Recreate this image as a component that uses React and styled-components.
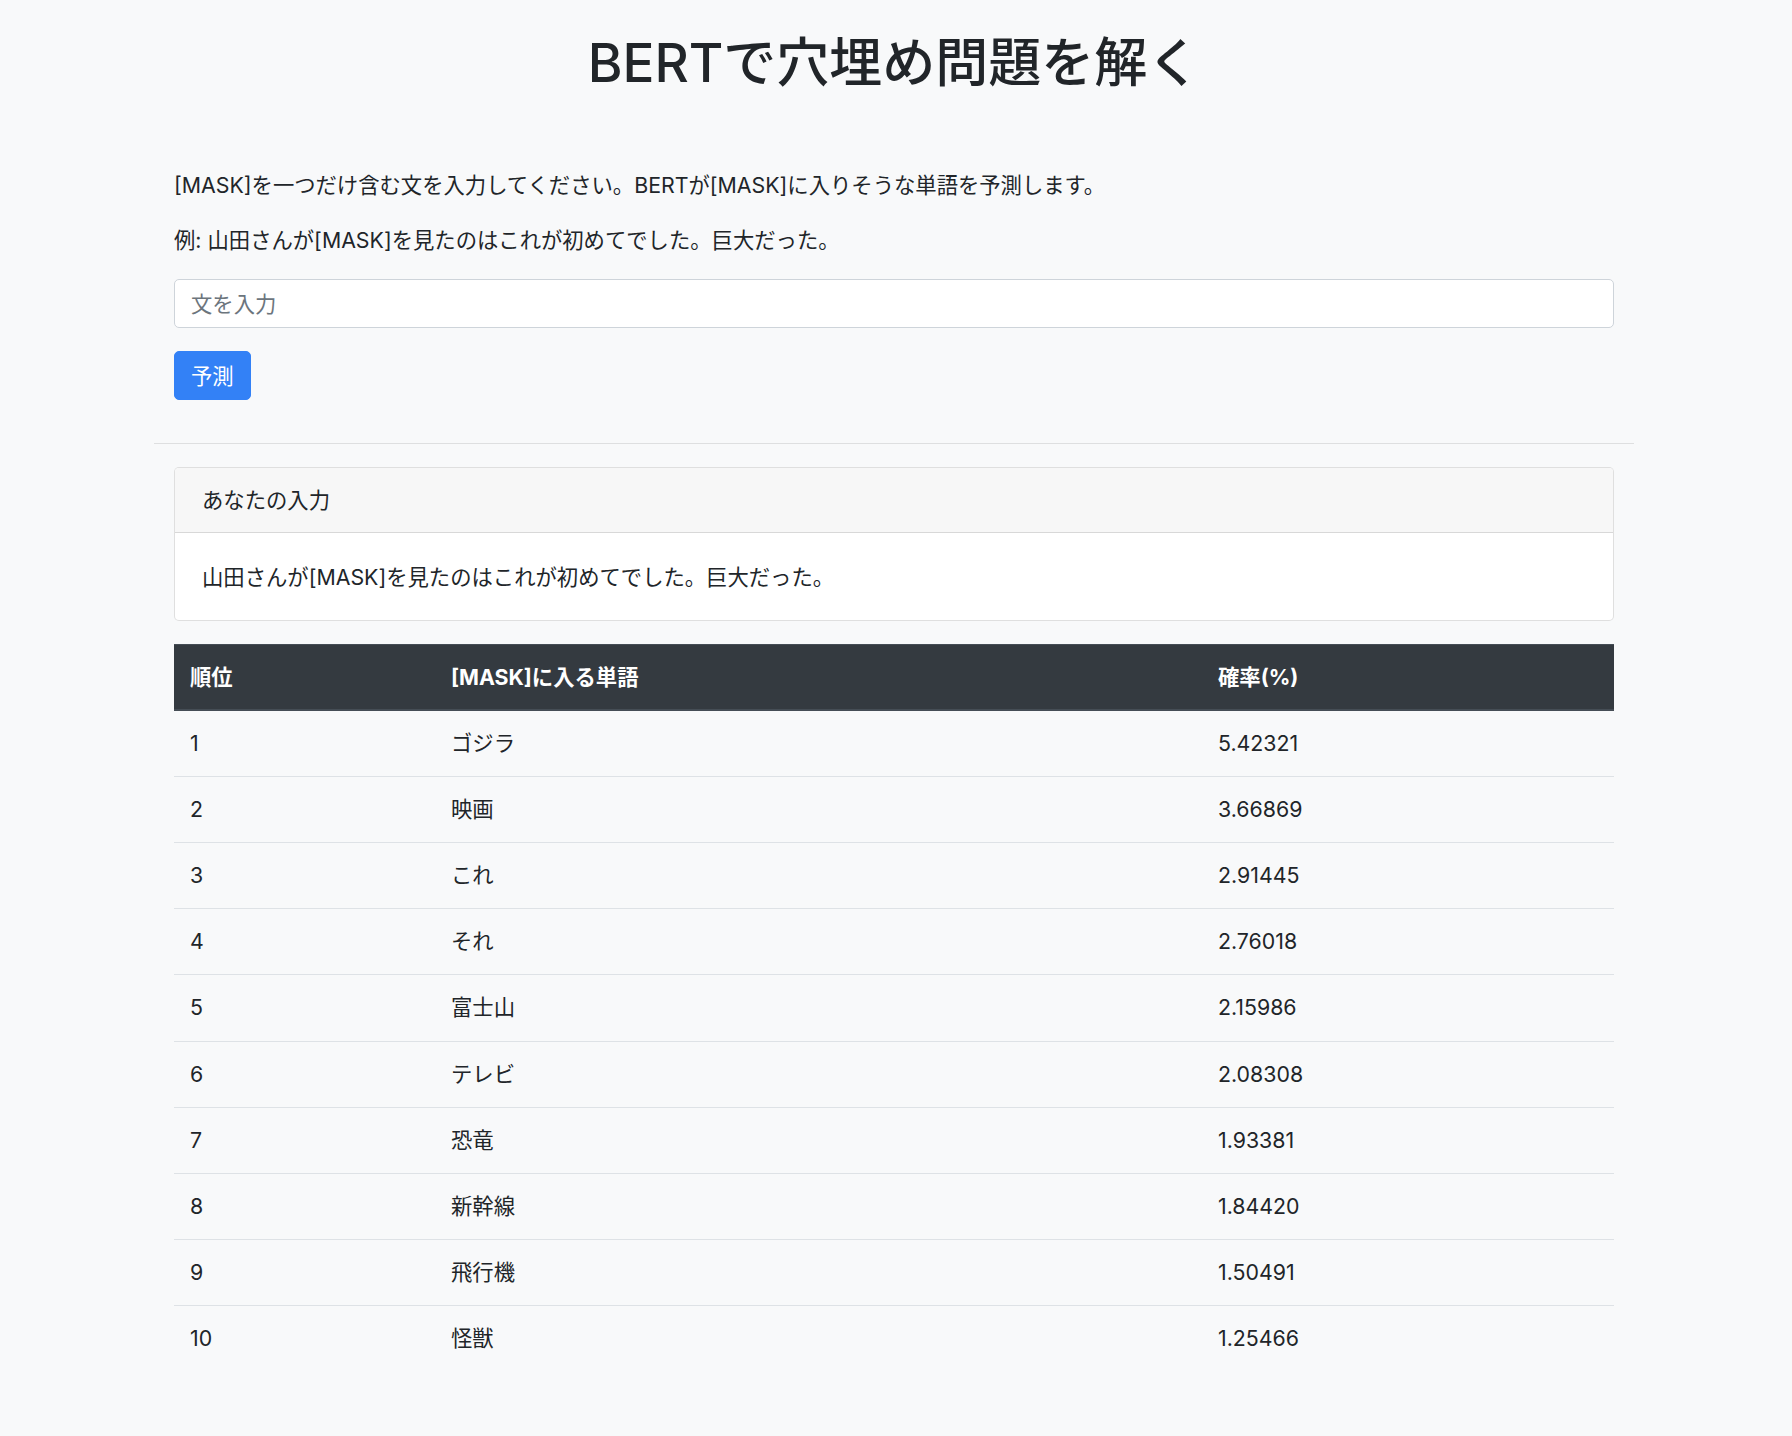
import React from 'react';
import styled, { createGlobalStyle } from 'styled-components';

const GlobalStyle = createGlobalStyle`
  html, body {
    margin: 0;
    padding: 0;
    background-color: #f8f9fa;
  }
  body {
    color: #212529;
    font-family: Inter, "Noto Sans CJK JP", sans-serif;
    font-size: 21.33px;
    line-height: 32px;
  }
  * {
    box-sizing: border-box;
  }
`;

const Page = styled.div`
  width: 1480px;
  margin: 0 calc(50% - 738px) 0 calc(50% - 742px);
  min-height: 100vh;
  padding-bottom: 40px;
`;

const Title = styled.h1`
  margin: 0;
  padding-top: 33px;
  font-size: 53px;
  font-weight: 500;
  line-height: 60px;
  text-align: center;
`;

const Section = styled.div`
  padding: 0 20px;
  margin-top: ${(p) => p.top || 0}px;
`;

const Text = styled.p`
  margin: 0 0 23px;
`;

const Input = styled.input`
  display: block;
  width: 100%;
  height: 49px;
  padding: 0 16px;
  font-family: inherit;
  font-size: 21.33px;
  color: #495057;
  background-color: #fff;
  border: 1px solid #ced4da;
  border-radius: 5px;
  margin-bottom: 23px;

  &::placeholder {
    color: #6c757d;
  }
`;

const Button = styled.button`
  display: inline-block;
  height: 49px;
  padding: 7px 16px;
  font-family: inherit;
  font-size: 21.33px;
  line-height: 32px;
  color: #fff;
  background-color: #3381f6;
  border: 1px solid #3381f6;
  border-radius: 5px;
  cursor: pointer;
  vertical-align: top;
`;

const Divider = styled.hr`
  margin: 43px 0 23px;
  border: 0;
  border-top: 1px solid rgba(0, 0, 0, 0.1);
`;

const Card = styled.div`
  background-color: #fff;
  border: 1px solid rgba(0, 0, 0, 0.125);
  border-radius: 5px;
  margin-bottom: 23px;
  overflow: hidden;
`;

const CardHeader = styled.div`
  padding: 16px 27px;
  background-color: #f7f7f7;
  border-bottom: 1px solid rgba(0, 0, 0, 0.125);
`;

const CardBody = styled.div`
  padding: 27.5px 27px 27px;
`;

const Table = styled.table`
  width: 100%;
  border-collapse: collapse;
  table-layout: fixed;
`;

const Th = styled.th`
  width: ${(p) => p.w || 'auto'};
  padding: 16px 16px;
  line-height: 32px;
  text-align: left;
  font-weight: 700;
  color: #fff;
  background-color: #343a40;
  border-top: 1px solid #454d55;
  border-bottom: 2px solid #454d55;
`;

const Td = styled.td`
  padding: 16px 16px;
  line-height: 33.2px;
  border-top: 1px solid #dee2e6;
`;

const results = [
  ['ゴジラ', '5.42321'],
  ['映画', '3.66869'],
  ['これ', '2.91445'],
  ['それ', '2.76018'],
  ['富士山', '2.15986'],
  ['テレビ', '2.08308'],
  ['恐竜', '1.93381'],
  ['新幹線', '1.84420'],
  ['飛行機', '1.50491'],
  ['怪獣', '1.25466'],
];

const App = () => {
  return (
    <>
      <GlobalStyle />
      <Page>
        <Title>BERTで穴埋め問題を解く</Title>

        <Section top={76}>
          <Text>[MASK]を一つだけ含む文を入力してください。BERTが[MASK]に入りそうな単語を予測します。</Text>
          <Text>例: 山田さんが[MASK]を見たのはこれが初めてでした。巨大だった。</Text>
          <Input type="text" placeholder="文を入力" />
          <Button>予測</Button>
        </Section>

        <Divider />

        <Section>
          <Card>
            <CardHeader>あなたの入力</CardHeader>
            <CardBody>山田さんが[MASK]を見たのはこれが初めてでした。巨大だった。</CardBody>
          </Card>

          <Table>
            <thead>
              <tr>
                <Th w="261px">順位</Th>
                <Th w="767px">[MASK]に入る単語</Th>
                <Th>確率(%)</Th>
              </tr>
            </thead>
            <tbody>
              {results.map(([word, prob], i) => (
                <tr key={word}>
                  <Td>{i + 1}</Td>
                  <Td>{word}</Td>
                  <Td>{prob}</Td>
                </tr>
              ))}
            </tbody>
          </Table>
        </Section>
      </Page>
    </>
  );
};

export default App;
